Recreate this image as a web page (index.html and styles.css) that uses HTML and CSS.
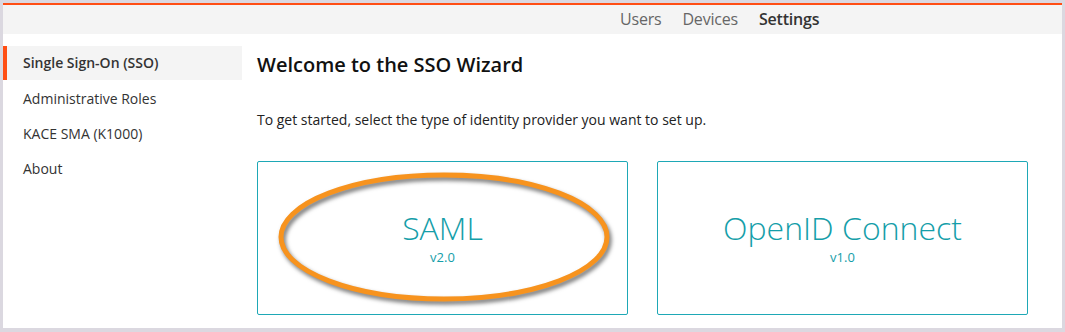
FILE: index.html
```html
<!DOCTYPE html>
<html lang="en">
<head>
    <meta charset="UTF-8">
    <title>SSO Wizard</title>
    <link rel="stylesheet" href="styles.css">
</head>
<body>
    <div class="window">
        <div class="topbar">
            <nav class="nav">
                <a href="#">Users</a>
                <a href="#">Devices</a>
                <a href="#" class="active">Settings</a>
            </nav>
        </div>

        <div class="main">
            <ul class="sidebar">
                <li class="active">Single Sign-On (SSO)</li>
                <li>Administrative Roles</li>
                <li>KACE SMA (K1000)</li>
                <li>About</li>
            </ul>

            <div class="content">
                <h1>Welcome to the SSO Wizard</h1>
                <p class="intro">To get started, select the type of identity provider you want to set up.</p>

                <div class="cards">
                    <div class="card">
                        <div class="card-title">SAML</div>
                        <div class="card-version">v2.0</div>
                        <!-- annotation ring drawn over the card -->
                        <svg class="highlight" width="336" height="134" viewBox="0 0 336 134">
                            <ellipse cx="164" cy="64" rx="163" ry="62" />
                        </svg>
                    </div>
                    <div class="card">
                        <div class="card-title">OpenID Connect</div>
                        <div class="card-version">v1.0</div>
                    </div>
                </div>
            </div>
        </div>
    </div>
</body>
</html>
```

FILE: styles.css
```css
body {
    margin: 0;
    background: #dbd8e0;
    font-family: 'Open Sans', 'Noto Sans', sans-serif;
    color: #333;
}

.window {
    margin: 3px 3px 4px 3px;
    height: 323px;
    background: #fff;
    border-top: 2px solid #ff4e14;
    overflow: hidden;
}

.topbar {
    height: 29px;
    background: #f4f4f4;
}

.nav {
    display: flex;
    gap: 21px;
    padding-left: 617px;
    line-height: 29px;
    font-size: 16px;
    letter-spacing: -0.2px;
}

.nav a {
    color: #666;
    text-decoration: none;
}

.nav a.active {
    color: #333;
    font-weight: 600;
}

.main {
    display: flex;
    margin-top: 12px;
}

.sidebar {
    list-style: none;
    margin: 0;
    padding: 0;
    width: 239px;
    font-size: 14px;
}

.sidebar li {
    height: 35px;
    line-height: 35px;
    padding-left: 20px;
    color: #333;
}

.sidebar li.active {
    height: 34px;
    line-height: 34px;
    padding-left: 16px;
    border-left: 4px solid #ff4e14;
    background: #f4f4f4;
    font-weight: 600;
    margin-bottom: 1px;
}

.content {
    padding-left: 15px;
}

h1 {
    margin: 5px 0 0;
    font-size: 20px;
    line-height: 28px;
    font-weight: 600;
    color: #111;
}

.intro {
    margin: 31px 0 0;
    font-size: 14px;
    line-height: 20px;
    color: #222;
}

.cards {
    display: flex;
    gap: 29px;
    margin-top: 31px;
}

.card {
    position: relative;
    width: 369px;
    height: 150px;
    border: 1px solid #1ea8b6;
    border-radius: 2px;
    display: flex;
    flex-direction: column;
    align-items: center;
    justify-content: center;
    padding-bottom: 2px;
    box-sizing: content-box;
    color: #159ea9;
}

.card-title {
    font-size: 32px;
    font-weight: 300;
    line-height: 40px;
}

.card-version {
    font-size: 13px;
    line-height: 18px;
}

.highlight {
    position: absolute;
    left: 22px;
    top: 11px;
    overflow: visible;
    filter: drop-shadow(2px 3px 2px rgba(0, 0, 0, 0.55));
}

.highlight ellipse {
    fill: none;
    stroke: #f7931e;
    stroke-width: 5;
}
```
